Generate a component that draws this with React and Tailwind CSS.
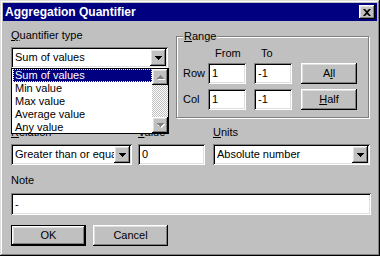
import React from "react";

const raised =
  "shadow-[inset_-1px_-1px_#000,inset_1px_1px_#fff,inset_-2px_-2px_#808080,inset_2px_2px_#dfdfdf]";
const sunken =
  "shadow-[inset_1px_1px_#808080,inset_-1px_-1px_#fff,inset_2px_2px_#000,inset_-2px_-2px_#dfdfdf]";

function Arrow({ disabled, up }) {
  return (
    <svg width="9" height="6" viewBox="0 0 9 6" className="block">
      {disabled && (
        <path d={up ? "M5 2h1v1h1v1h1v1h1v1H2V5h3z" : "M2 2h7v1h-1v1h-1v1h-1v1H5V4H2z"} fill="#fff" />
      )}
      <path
        d={up ? "M4 1h1v1h1v1h1v1h1v1H1V4h1V3h1V2h1z" : "M1 1h7v1H7v1H6v1H5v1H4V4H3V3H2V2H1z"}
        fill={disabled ? "#808080" : "#000"}
      />
    </svg>
  );
}

function DropButton() {
  return (
    <div className={`w-[16px] h-[17px] bg-[#c0c0c0] flex items-center justify-center ${raised}`}>
      <Arrow />
    </div>
  );
}

function Combo({ value, width }) {
  return (
    <div className={`h-[21px] bg-white flex items-center pl-[4px] pr-[2px] ${sunken}`} style={{ width }}>
      <span className="flex-1 overflow-hidden whitespace-nowrap">{value}</span>
      <DropButton />
    </div>
  );
}

function Field({ value, className }) {
  return (
    <div className={`h-[21px] bg-white flex items-center pl-[4px] whitespace-nowrap overflow-hidden ${sunken} ${className}`}>
      {value}
    </div>
  );
}

function Button({ children, isDefault, className }) {
  if (isDefault) {
    return (
      <div className={`border border-black ${className}`}>
        <div className={`w-full h-full bg-[#c0c0c0] flex items-center justify-center ${raised}`}>{children}</div>
      </div>
    );
  }
  return (
    <div className={`bg-[#c0c0c0] flex items-center justify-center ${raised} ${className}`}>{children}</div>
  );
}

const items = ["Sum of values", "Min value", "Max value", "Average value", "Any value"];

export default function App() {
  return (
    <div
      className="w-[380px] h-[256px] bg-[#c0c0c0] p-[3px] text-[11px] leading-[13px] text-black shadow-[inset_-1px_-1px_#000,inset_1px_1px_#dfdfdf,inset_-2px_-2px_#808080,inset_2px_2px_#fff] overflow-hidden"
      style={{ fontFamily: '"Liberation Sans", Arial, sans-serif' }}
    >
      {/* caption */}
      <div className="h-[18px] bg-[#000080] flex items-center justify-between pl-[2px] pr-[2px]">
        <span className="text-white font-bold text-[12px]">Aggregation Quantifier</span>
        <div className={`w-[16px] h-[14px] bg-[#c0c0c0] flex items-center justify-center ${raised}`}>
          <svg width="8" height="7" viewBox="0 0 8 7" className="block">
            <path d="M0 0h2l2 2 2-2h2L5 3.5 8 7H6L4 5 2 7H0l3-3.5z" fill="#000" />
          </svg>
        </div>
      </div>

      <div className="px-[8px]">
        {/* top row */}
        <div className="flex items-start">
          <div className="w-[157px] mt-[8px] relative">
            <div className="h-[13px]">
              <span className="underline">Q</span>uantifier type
            </div>
            <div className="mt-[5px] relative">
              <Combo value="Sum of values" width={157} />
              {/* open list */}
              <div className="absolute left-0 top-[21px] w-[158px] h-[66px] bg-white border border-black flex z-10 overflow-hidden">
                <div className="flex-1 pt-[0px]">
                  {items.map((it, i) => (
                    <div
                      key={it}
                      className={`h-[13px] pl-[2px] ml-[1px] whitespace-nowrap ${
                        i === 0 ? "bg-[#000080] text-white outline outline-1 outline-dotted outline-[#ffff80] -outline-offset-1" : ""
                      }`}
                    >
                      {it}
                    </div>
                  ))}
                </div>
                <div className="w-[16px] flex flex-col">
                  <div className={`h-[16px] bg-[#c0c0c0] flex items-center justify-center ${raised}`}>
                    <Arrow up disabled />
                  </div>
                  <div className="flex-1 bg-[repeating-conic-gradient(#c0c0c0_0_25%,#fff_0_50%)] bg-[length:2px_2px]" />
                  <div className={`h-[16px] bg-[#c0c0c0] flex items-center justify-center ${raised}`}>
                    <Arrow disabled />
                  </div>
                </div>
              </div>
            </div>
          </div>

          {/* Range group */}
          <div className="ml-[8px] mt-[15px] w-[196px] h-[82px] border border-[#808080] shadow-[inset_1px_1px_#fff,1px_1px_#fff] relative">
            <div className="absolute left-[6px] top-[-7px] bg-[#c0c0c0] px-[1px]">
              <span className="underline">R</span>ange
            </div>
            <div className="flex mt-[10px] h-[13px]">
              <div className="ml-[38px] w-[46px]">From</div>
              <div>To</div>
            </div>
            <div className="flex items-center mt-[3px]">
              <div className="w-[31px] pl-[6px]">Row</div>
              <Field value="1" className="w-[38px]" />
              <Field value="-1" className="w-[38px] ml-[8px]" />
              <Button className="w-[56px] h-[21px] ml-[9px]">
                <span>
                  A<span className="underline">l</span>l
                </span>
              </Button>
            </div>
            <div className="flex items-center mt-[5px]">
              <div className="w-[31px] pl-[6px]">Col</div>
              <Field value="1" className="w-[38px]" />
              <Field value="-1" className="w-[38px] ml-[8px]" />
              <Button className="w-[56px] h-[21px] ml-[9px]">
                <span>
                  <span className="underline">H</span>alf
                </span>
              </Button>
            </div>
          </div>
        </div>

        {/* relation / value / units */}
        <div className="flex mt-[8px]">
          <div className="w-[121px]">
            <div className="h-[13px]">
              <span className="underline">R</span>elation
            </div>
            <div className="mt-[5px]">
              <Combo value="Greater than or equal" width={121} />
            </div>
          </div>
          <div className="w-[67px] ml-[6px]">
            <div className="h-[13px]">
              <span className="underline">V</span>alue
            </div>
            <Field value="0" className="mt-[5px] w-[67px]" />
          </div>
          <div className="w-[157px] ml-[8px]">
            <div className="h-[13px]">
              <span className="underline">U</span>nits
            </div>
            <div className="mt-[5px]">
              <Combo value="Absolute number" width={157} />
            </div>
          </div>
        </div>

        {/* note */}
        <div className="mt-[9px] h-[13px]">Note</div>
        <Field value="-" className="mt-[6px] w-[360px] h-[22px]" />

        {/* buttons */}
        <div className="flex mt-[10px] gap-[7px]">
          <Button isDefault className="w-[75px] h-[21px]">
            OK
          </Button>
          <Button className="w-[75px] h-[21px]">Cancel</Button>
        </div>
      </div>
    </div>
  );
}
